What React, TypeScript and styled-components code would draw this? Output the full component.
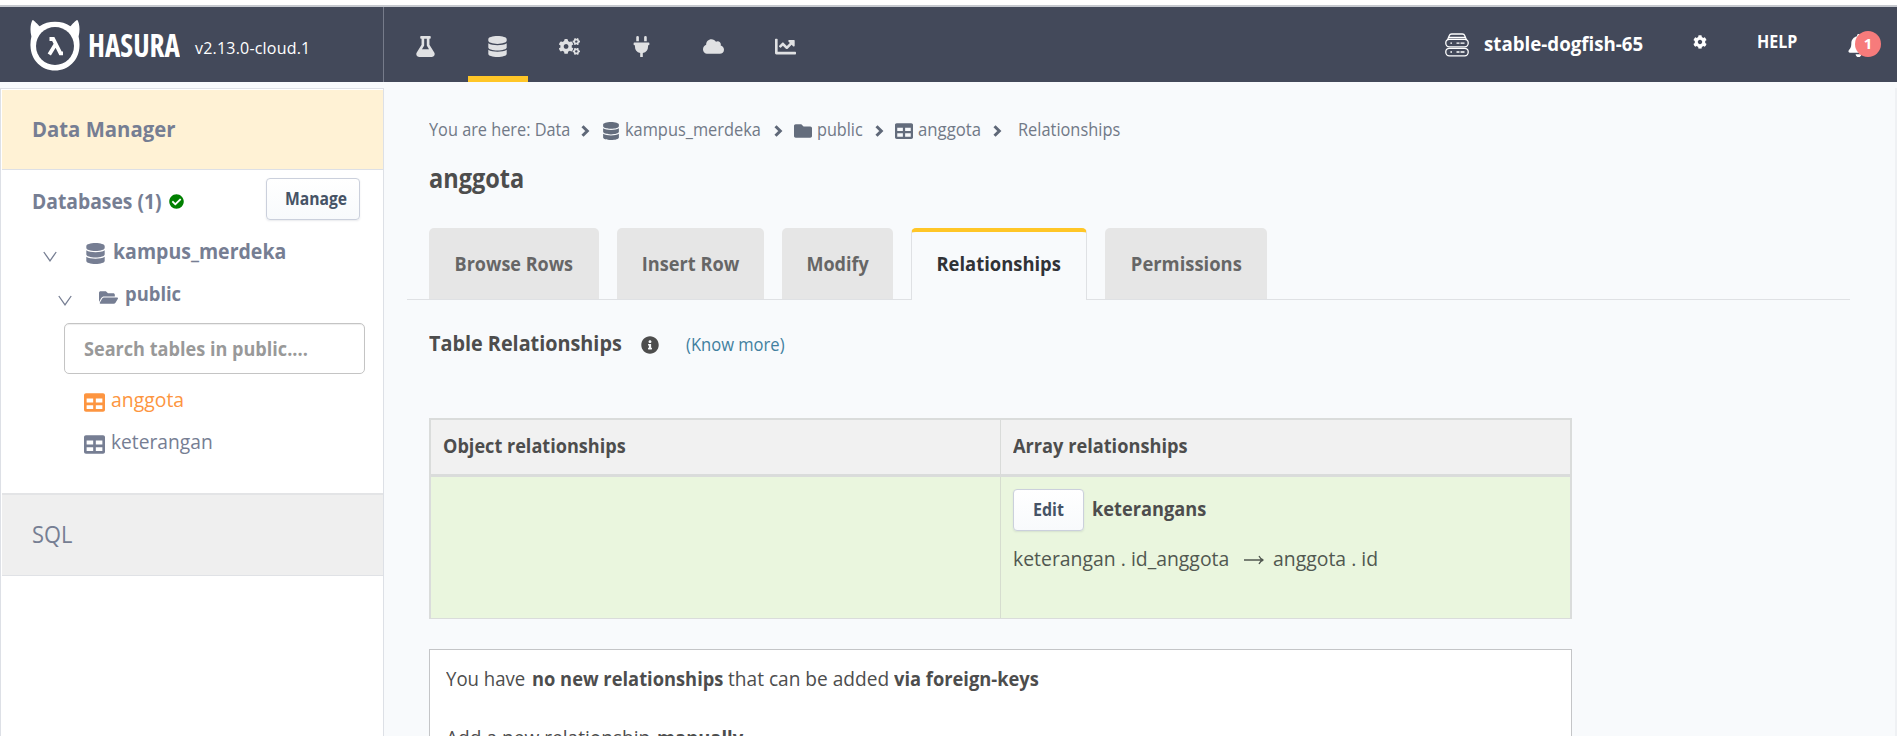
import React from 'react';
import styled, { createGlobalStyle } from 'styled-components';
import {
  FaFlask, FaDatabase, FaCogs, FaPlug, FaCloud, FaChartLine, FaCog, FaBell,
  FaCheckCircle, FaFolderOpen, FaFolder, FaTable, FaInfoCircle,
} from 'react-icons/fa';

const Global = createGlobalStyle`
  * { box-sizing: border-box; }
  body {
    margin: 0;
    overflow: hidden;
    background: #f8fafc;
    color: #4d4d4d;
    font-family: 'Open Sans', 'Noto Sans', sans-serif;
    font-size: 20px;
    line-height: 24px;
  }
  svg { display: block; flex: none; }
`;

const Page = styled.div`
  height: 736px;
  overflow: hidden;
  display: flex;
  flex-direction: column;
`;
const TopStrip = styled.div`
  height: 7px;
  flex: none;
  background: #fff;
  border-bottom: 2px solid #c6c9cf;
`;

/* Slightly narrowed text; $k is the horizontal scale of the glyphs, $w the room it takes. */
const Label = styled.span<{ $size?: number; $k?: number; $bold?: boolean; $w?: number; $center?: boolean }>`
  display: inline-block;
  flex: none;
  ${(p) => p.$w && `width: ${p.$w}px;`}
  font-size: ${(p) => p.$size ?? 20}px;
  font-weight: ${(p) => (p.$bold ? 700 : 400)};
  white-space: nowrap;
  transform: scaleX(${(p) => p.$k ?? 0.9});
  transform-origin: ${(p) => (p.$center ? 'center' : 'left')} center;
`;

/* ---------- header ---------- */
const Header = styled.header`
  height: 75px;
  flex: none;
  display: flex;
  background: #43495a;
  color: #fff;
`;
const Brand = styled.div`
  width: 384px;
  padding-left: 30px;
  display: flex;
  align-items: center;
  border-right: 1px solid #767b8a;
`;
const Wordmark = styled.svg`
  margin: 0 15px 0 8px;
  text { font: 700 32px 'Open Sans', sans-serif; font-stretch: 75%; fill: #fff; }
`;
const Version = styled.span`
  margin-top: 7px;
  font-size: 16px;
  letter-spacing: 0.2px;
`;
const Nav = styled.nav`
  display: flex;
  gap: 12px;
  margin-left: 12px;
`;
const NavItem = styled.a<{ $active?: boolean }>`
  width: 60px;
  height: 75px;
  padding: 10px 2px 0 0;
  display: flex;
  align-items: center;
  justify-content: center;
  font-size: 21px;
  color: #e0e1e3;
  border-bottom: 6px solid ${(p) => (p.$active ? '#ffc627' : 'transparent')};
`;
const HeaderRight = styled.div`
  margin-left: auto;
  padding-right: 30px;
  display: flex;
  align-items: center;
`;
const ProjectName = styled(Label)`
  margin: 0 50px 1px 15px;
`;
const Settings = styled.span`
  font-size: 14px;
  margin-bottom: 5px;
`;
const Help = styled(Label)`
  margin: 0 50px 7px 50px;
`;
const Bell = styled.span`
  position: relative;
  width: 20px;
  font-size: 23px;
  margin-top: 2px;
`;
const Badge = styled.span`
  position: absolute;
  left: 8px;
  top: -3px;
  width: 26px;
  height: 26px;
  border-radius: 50%;
  background: #f77b7b;
  font-size: 15px;
  font-weight: 700;
  line-height: 25px;
  text-align: center;
`;

/* ---------- sidebar ---------- */
const Body = styled.div`
  flex: 1;
  min-height: 0;
  display: flex;
`;
const Sidebar = styled.aside`
  width: 384px;
  flex: none;
  margin-top: 6px;
  padding: 1px 0 0 1px;
  background: #fff;
  border: 1px solid #dde0e6;
  border-bottom: 0;
  color: #767e93;
`;
const SideTitle = styled.div`
  height: 80px;
  padding: 0 0 4px 30px;
  display: flex;
  align-items: center;
  background: #fff2d5;
  border-bottom: 1px solid #dde0e6;
`;
const DbHeader = styled.div`
  height: 50px;
  padding: 8px 23px 0 30px;
  display: flex;
  align-items: center;
`;
const DbTitle = styled(Label)`
  margin: 2px 7px 0 0;
`;
const Check = styled(FaCheckCircle)`
  margin-top: 5px;
  font-size: 15px;
  color: #008000;
`;
const Button = styled.button<{ $width: number; $pad: number }>`
  width: ${(p) => p.$width}px;
  height: 42px;
  padding: 0 0 3px ${(p) => p.$pad}px;
  text-align: left;
  border: 1px solid #cbd0dc;
  border-radius: 4px;
  background: linear-gradient(#fff, #f8fafc);
  box-shadow: 0 1px 2px rgba(40, 50, 80, 0.1);
  color: #465366;
  font-family: inherit;
`;
const Manage = styled(Button)`
  margin-left: auto;
`;
const TreeRow = styled.div<{ $top: number; $indent: number; $lift: number }>`
  height: 34px;
  margin-top: ${(p) => p.$top}px;
  padding-left: ${(p) => p.$indent}px;
  display: flex;
  align-items: center;
  font-size: 21px;
  & > span { margin: 0 0 ${(p) => p.$lift}px 7px; }
`;
const Caret = styled.svg<{ $gap: number }>`
  margin: 6px ${(p) => p.$gap}px 0 0;
`;
const SearchBox = styled.div`
  width: 301px;
  height: 51px;
  margin: 9px 0 0 62px;
  padding: 0 0 1px 19px;
  display: flex;
  align-items: center;
  border: 1px solid #c4c4c4;
  border-radius: 5px;
  box-shadow: inset 0 1px 1px rgba(0, 0, 0, 0.07);
  background: #fff;
`;
const SearchInput = styled.input`
  width: 270px;
  padding: 0;
  border: 0;
  outline: 0;
  background: transparent;
  font: 700 20px 'Open Sans', sans-serif;
  transform: scaleX(0.905);
  transform-origin: left center;
  &::placeholder { color: #999; opacity: 1; }
`;
const Tables = styled.div`
  padding: 7px 0 28px 82px;
`;
const TableLink = styled.a<{ $active?: boolean }>`
  height: 42px;
  display: flex;
  align-items: center;
  gap: 6px;
  font-size: 21px;
  color: ${(p) => (p.$active ? '#fd9540' : '#767e93')};
  & > span { margin-bottom: 4px; }
`;
const SqlLink = styled.div`
  height: 83px;
  padding: 0 0 2px 30px;
  display: flex;
  align-items: center;
  background: #efefef;
  border-top: 2px solid #e3e4e6;
  border-bottom: 1px solid #e0e2e6;
`;

/* ---------- main ---------- */
const Main = styled.main`
  flex: 1;
  min-width: 0;
  margin-top: 6px;
  padding: 29px 0 0 45px;
  border-right: 2px solid #eff1f4;
`;
const Crumbs = styled.div`
  height: 24px;
  display: flex;
  align-items: center;
  color: #717987;
  font-size: 18px;
`;
const Sep = styled.svg<{ $after: number }>`
  margin: 4px ${(p) => p.$after}px 0 12px;
`;
const CrumbIcon = styled.span`
  margin: 4px 5px 0 0;
  color: #646d7d;
`;
const Title = styled.h2`
  display: flex;
  align-items: center;
  margin: 22px 0 35px;
  height: 30px;
`;
const Tabs = styled.div`
  width: 1443px;
  margin-left: -22px;
  padding-left: 22px;
  display: flex;
  gap: 18px;
  border-bottom: 1px solid #dfe1e4;
`;
const Tab = styled.a<{ $w: number; $active?: boolean }>`
  width: ${(p) => p.$w}px;
  height: ${(p) => (p.$active ? 72 : 71)}px;
  margin-bottom: ${(p) => (p.$active ? -1 : 0)}px;
  display: flex;
  align-items: center;
  justify-content: center;
  border-radius: 5px 5px 0 0;
  background: ${(p) => (p.$active ? '#f8fafc' : '#e6e6e6')};
  color: ${(p) => (p.$active ? '#303236' : '#666')};
  ${(p) => p.$active && `
    border: 1px solid #dfe1e4;
    border-top: 4px solid #ffc627;
    border-bottom: 0;
    padding-bottom: 4px;
  `}
`;
const Section = styled.div`
  height: 30px;
  margin: 28px 0 60px;
  display: flex;
  align-items: center;
`;
const SectionTitle = styled(Label)`
  margin-bottom: 2px;
`;
const Info = styled(FaInfoCircle)`
  font-size: 18px;
  margin: 4px 27px 0 20px;
`;
const KnowMore = styled(Label)`
  margin-top: 2px;
  color: #41809f;
`;
const Grid = styled.div`
  width: 1143px;
  display: grid;
  grid-template-columns: 570px 1fr;
  border: 2px solid #dadcdb;
  border-bottom-width: 1px;
`;
const HeadCell = styled.div<{ $divided?: boolean }>`
  height: 57px;
  padding: 0 0 3px 12px;
  display: flex;
  align-items: center;
  background: #f1f1f1;
  border-bottom: 3px solid #dadcdb;
  border-right: ${(p) => (p.$divided ? '1px solid #d9dbd9' : '0')};
`;
const BodyCell = styled.div<{ $divided?: boolean }>`
  height: 141px;
  padding: 12px 0 0 12px;
  background: #eaf6de;
  border-right: ${(p) => (p.$divided ? '1px solid #d6ddcf' : '0')};
`;
const RelName = styled.div`
  display: flex;
  align-items: center;
  gap: 8px;
  margin-bottom: 16px;
  & > span { margin-bottom: 3px; }
`;
const RelPath = styled.div`
  display: flex;
  align-items: center;
  color: #515850;
`;
const Arrow = styled.svg`
  margin: 2px 9px 0 15px;
`;
const Panel = styled.section`
  width: 1143px;
  height: 200px;
  margin-top: 30px;
  padding: 17px 16px;
  background: #fff;
  border: 1px solid #c4c5c7;
`;
const Line = styled.div`
  display: flex;
  height: 24px;
  margin-bottom: 35px;
`;

const HasuraMark = () => (
  <svg width="50" height="52" viewBox="0 0 50 52">
    <path
      fill="#fff"
      d="M2.6 1C4.5 1.500 7.500 5.500 9.600 7.200C14 4.200 19 2.800 25 2.800S36 4.200 40.400 7.200C42.500 5.500 45 1.500 47.400 1C49.600 4.500 50.200 11 48.600 17.500C49.300 20.500 49.700 24 49.500 27C49.200 41 38.500 51.500 25 51.500S.8 41 .5 27C.3 24 .7 20.500 1.400 17.500C-.2 11 .4 4.500 2.600 1Z"
    />
    <circle cx="25" cy="27" r="19" fill="#43495a" />
    <path fill="none" stroke="#fff" strokeWidth="3.800" d="M19.500 20H23.200L30.500 34.300H33M25.400 25.500L19.300 35.500" />
  </svg>
);

const ServerIcon = () => (
  <svg width="24" height="24" viewBox="0 0 24 24" fill="none" stroke="#fff" strokeWidth="1.300">
    <rect x=".8" y="6.300" width="22.400" height="7.500" rx="3.500" />
    <rect x=".8" y="15.300" width="22.400" height="7.500" rx="3.500" />
    <path d="M2.500 7L4.300 2.600Q4.900 1 6.600 1H17.400Q19.100 1 19.700 2.600L21.500 7M5.400 10.200H7M5.400 19H7M11.500 10.200H14.500M15.500 10.200H19.500M11.500 19H14.500M15.500 19H19.500M4 4.500H20" />
  </svg>
);

const CaretDown = ({ gap }: { gap: number }) => (
  <Caret $gap={gap} width="14" height="11" viewBox="0 0 14 11" fill="none" stroke="#767e93" strokeWidth="1.300">
    <path d="M.8 1L7 9.800L13.200 1" />
  </Caret>
);

const Separator = ({ after }: { after: number }) => (
  <Sep $after={after} width="9" height="12" viewBox="0 0 9 12" fill="none" stroke="#5f6878" strokeWidth="3">
    <path d="M1.500 1.200L6.300 6L1.500 10.800" />
  </Sep>
);

export default function App() {
  return (
    <Page>
      <Global />
      <TopStrip />
      <Header>
        <Brand>
          <HasuraMark />
          <Wordmark width="92" height="44" viewBox="0 0 92 44">
            <text x="0" y="34" textLength="92" lengthAdjust="spacingAndGlyphs">HASURA</text>
          </Wordmark>
          <Version>v2.13.0-cloud.1</Version>
        </Brand>
        <Nav>
          <NavItem><FaFlask /></NavItem>
          <NavItem $active><FaDatabase /></NavItem>
          <NavItem><FaCogs /></NavItem>
          <NavItem><FaPlug /></NavItem>
          <NavItem><FaCloud /></NavItem>
          <NavItem><FaChartLine /></NavItem>
        </Nav>
        <HeaderRight>
          <ServerIcon />
          <ProjectName $bold $k={0.935} $w={159}>stable-dogfish-65</ProjectName>
          <Settings><FaCog /></Settings>
          <Help $bold $size={18} $k={0.89} $w={40}>HELP</Help>
          <Bell><FaBell /><Badge>1</Badge></Bell>
        </HeaderRight>
      </Header>
      <Body>
        <Sidebar>
          <SideTitle><Label $bold $size={22} $k={0.923}>Data Manager</Label></SideTitle>
          <DbHeader>
            <DbTitle $bold $size={22} $k={0.877} $w={130}>Databases (1)</DbTitle>
            <Check />
            <Manage $width={94} $pad={18}><Label $bold $size={18} $k={0.87} $w={61}>Manage</Label></Manage>
          </DbHeader>
          <TreeRow $top={16} $indent={41} $lift={6}>
            <CaretDown gap={28} />
            <FaDatabase />
            <Label $bold $size={22} $k={0.887}>kampus_merdeka</Label>
          </TreeRow>
          <TreeRow $top={10} $indent={56} $lift={6}>
            <CaretDown gap={27} />
            <FaFolderOpen size={19} />
            <Label $bold $k={0.92}>public</Label>
          </TreeRow>
          <SearchBox><SearchInput placeholder="Search tables in public...." /></SearchBox>
          <Tables>
            <TableLink $active><FaTable /><Label $k={0.97}>anggota</Label></TableLink>
            <TableLink><FaTable /><Label $k={0.96}>keterangan</Label></TableLink>
          </Tables>
          <SqlLink><Label $size={24} $k={0.91}>SQL</Label></SqlLink>
        </Sidebar>
        <Main>
          <Crumbs>
            <Label $size={18} $w={140} $k={0.905}>You are here: Data</Label>
            <Separator after={12} />
            <CrumbIcon><FaDatabase /></CrumbIcon>
            <Label $size={18} $w={137} $k={0.91}>kampus_merdeka</Label>
            <Separator after={11} />
            <CrumbIcon><FaFolder /></CrumbIcon>
            <Label $size={18} $w={46} $k={0.9}>public</Label>
            <Separator after={11} />
            <CrumbIcon><FaTable /></CrumbIcon>
            <Label $size={18} $w={63} $k={0.93}>anggota</Label>
            <Separator after={16} />
            <Label $size={18} $w={102} $k={0.91}>Relationships</Label>
          </Crumbs>
          <Title><Label $bold $size={26} $k={0.905}>anggota</Label></Title>
          <Tabs>
            <Tab $w={170}><Label $bold $center $k={0.9}>Browse Rows</Label></Tab>
            <Tab $w={147}><Label $bold $center $k={0.91}>Insert Row</Label></Tab>
            <Tab $w={111}><Label $bold $center $k={0.9}>Modify</Label></Tab>
            <Tab $w={176} $active><Label $bold $center $k={0.92}>Relationships</Label></Tab>
            <Tab $w={162}><Label $bold $center $k={0.92}>Permissions</Label></Tab>
          </Tabs>
          <Section>
            <SectionTitle $bold $size={22} $w={192} $k={0.9}>Table Relationships</SectionTitle>
            <Info />
            <KnowMore $size={18} $k={0.92}>(Know more)</KnowMore>
          </Section>
          <Grid>
            <HeadCell $divided><Label $bold $k={0.905}>Object relationships</Label></HeadCell>
            <HeadCell><Label $bold $k={0.91}>Array relationships</Label></HeadCell>
            <BodyCell $divided />
            <BodyCell>
              <RelName>
                <Button $width={71} $pad={19}><Label $bold $size={18} $w={34} $k={0.89}>Edit</Label></Button>
                <Label $bold $k={0.91}>keterangans</Label>
              </RelName>
              <RelPath>
                <Label $w={216} $k={0.97}>keterangan . id_anggota</Label>
                <Arrow width="20" height="10" viewBox="0 0 20 10" fill="none" stroke="#515850" strokeWidth="1.300">
                  <path d="M0 5H19M15 1Q16.500 4.300 19.300 5Q16.500 5.700 15 9" />
                </Arrow>
                <Label $k={0.97}>anggota . id</Label>
              </RelPath>
            </BodyCell>
          </Grid>
          <Panel>
            <Line>
              <Label $w={86} $k={0.93}>You have</Label>
              <Label $w={196} $k={0.915} $bold>no new relationships</Label>
              <Label $w={166} $k={0.955}>that can be added</Label>
              <Label $w={150} $k={0.915} $bold>via foreign-keys</Label>
            </Line>
            <Line>
              <Label $w={211} $k={0.955}>Add a new relationship</Label>
              <Label $w={90} $k={0.92} $bold>manually</Label>
            </Line>
          </Panel>
        </Main>
      </Body>
    </Page>
  );
}
